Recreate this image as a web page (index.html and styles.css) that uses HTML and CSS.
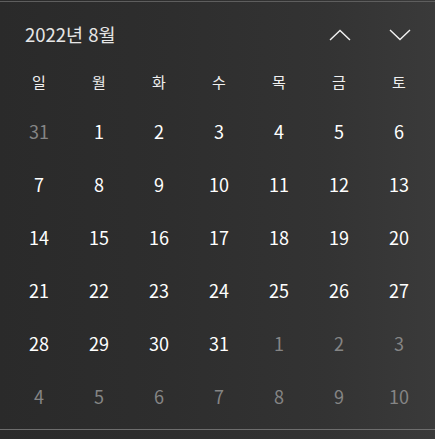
FILE: index.html
```html
<!DOCTYPE html>
<html lang="ko">
<head>
<meta charset="utf-8">
<link rel="stylesheet" href="styles.css">
</head>
<body>
<div class="panel">
  <div class="topline"></div>
  <div class="header">
    <div class="title">2022년 8월</div>
    <div class="navs">
      <svg class="chev" width="22" height="12" viewBox="0 0 22 12"><polyline points="1,11 11,1.5 21,11" fill="none" stroke="#f2f2f2" stroke-width="1.4"/></svg>
      <svg class="chev" width="22" height="12" viewBox="0 0 22 12"><polyline points="1,1 11,10.5 21,1" fill="none" stroke="#f2f2f2" stroke-width="1.4"/></svg>
    </div>
  </div>
  <div class="grid">
    <div class="wd">일</div><div class="wd">월</div><div class="wd">화</div><div class="wd">수</div><div class="wd">목</div><div class="wd">금</div><div class="wd">토</div>
    <div class="d dim">31</div><div class="d">1</div><div class="d">2</div><div class="d">3</div><div class="d">4</div><div class="d">5</div><div class="d">6</div>
    <div class="d">7</div><div class="d">8</div><div class="d">9</div><div class="d">10</div><div class="d">11</div><div class="d">12</div><div class="d">13</div>
    <div class="d">14</div><div class="d">15</div><div class="d">16</div><div class="d">17</div><div class="d">18</div><div class="d">19</div><div class="d">20</div>
    <div class="d">21</div><div class="d">22</div><div class="d">23</div><div class="d">24</div><div class="d">25</div><div class="d">26</div><div class="d">27</div>
    <div class="d">28</div><div class="d">29</div><div class="d">30</div><div class="d">31</div><div class="d dim">1</div><div class="d dim">2</div><div class="d dim">3</div>
    <div class="d dim">4</div><div class="d dim">5</div><div class="d dim">6</div><div class="d dim">7</div><div class="d dim">8</div><div class="d dim">9</div><div class="d dim">10</div>
  </div>
  <div class="bottomline"></div>
</div>
</body>
</html>
```
FILE: styles.css
```css
html, body {
  margin: 0;
  padding: 0;
  background: #2c2c2c;
}
.panel {
  width: 435px;
  height: 439px;
  overflow: hidden;
  background: linear-gradient(90deg, #2a2a2a 0%, #2e2e2e 40%, #333333 75%, #3a3a3a 100%);
  font-family: "Noto Sans CJK KR", "Noto Sans", sans-serif;
  color: #ffffff;
  box-sizing: border-box;
  padding-top: 1px;
}
.topline {
  height: 1px;
  background: #5e5e5e;
}
.header {
  height: 56px;
  display: flex;
  justify-content: space-between;
  align-items: flex-start;
  padding: 20px 24px 0 25px;
  box-sizing: border-box;
}
.title {
  font-size: 18.5px;
  line-height: 24px;
  color: #e6e6e6;
}
.navs {
  display: flex;
  gap: 38px;
  padding-top: 7px;
}
.chev {
  display: block;
}
.grid {
  display: grid;
  grid-template-columns: repeat(7, 60px);
  grid-template-rows: 46px repeat(6, 53px);
  padding-left: 9px;
}
.wd, .d {
  display: flex;
  align-items: center;
  justify-content: center;
}
.wd {
  font-size: 15px;
  color: #f0f0f0;
}
.d {
  font-size: 18px;
  color: #ffffff;
}
.d.dim {
  color: #858585;
}
.bottomline {
  margin-top: 7px;
  height: 1px;
  background: #6e6e6e;
}
```
